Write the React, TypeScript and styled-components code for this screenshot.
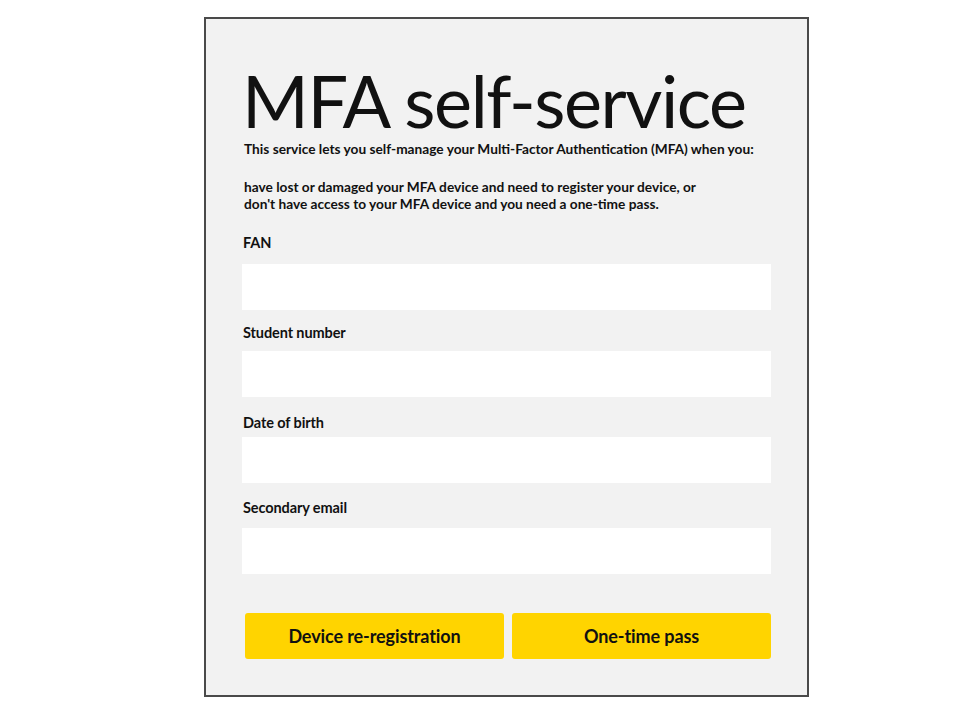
import React from "react";
import styled, { createGlobalStyle } from "styled-components";

const GlobalStyle = createGlobalStyle`
  html, body {
    margin: 0;
    padding: 0;
    background: #ffffff;
  }
  body {
    font-family: Lato, "Open Sans", sans-serif;
    color: #111111;
  }
`;

const Page = styled.div`
  width: 970px;
  height: 727px;
  display: flex;
  justify-content: center;
  padding-top: 17px;
  box-sizing: border-box;
`;

const Card = styled.div`
  width: 605px;
  height: 680px;
  box-sizing: border-box;
  margin-left: 43px;
  border: 2px solid #4a4a4a;
  background: #f2f2f2;
  padding: 49px 36px 0 36px;
  display: flex;
  flex-direction: column;
`;

const Title = styled.h1`
  margin: 0;
  font-family: Lato, sans-serif;
  font-weight: 400;
  font-size: 72px;
  letter-spacing: -1.45px;
  line-height: 64px;
  height: 64px;
  color: #111111;
`;

const Intro = styled.p`
  margin: 8px 0 0 2px;
  font-size: 13.7px;
  font-weight: 700;
  line-height: 17px;
`;

const Reasons = styled.p`
  margin: 21px 0 0 2px;
  font-size: 13.7px;
  font-weight: 700;
  line-height: 17px;
`;

const Field = styled.div<{ $top: number }>`
  display: flex;
  flex-direction: column;
  margin-top: ${(p) => p.$top}px;
`;

const Label = styled.label`
  font-size: 14.5px;
  font-weight: 700;
  letter-spacing: -0.1px;
  line-height: 16px;
  margin-left: 1px;
`;

const Input = styled.input<{ $gap: number }>`
  margin-top: ${(p) => p.$gap}px;
  height: 46px;
  border: none;
  outline: none;
  background: #ffffff;
  padding: 0 10px;
  box-sizing: border-box;
  font-family: Lato, sans-serif;
  font-size: 14px;
`;

const Actions = styled.div`
  display: flex;
  gap: 8px;
  margin-top: 39px;
  padding-left: 3px;
`;

const Button = styled.button`
  flex: 1;
  height: 46px;
  border: none;
  border-radius: 3px;
  background: #ffd400;
  font-family: Lato, sans-serif;
  font-size: 18px;
  font-weight: 700;
  letter-spacing: -0.1px;
  color: #111111;
  cursor: pointer;
`;

const fields = [
  { label: "FAN", top: 23, gap: 13 },
  { label: "Student number", top: 15, gap: 10 },
  { label: "Date of birth", top: 18, gap: 6 },
  { label: "Secondary email", top: 17, gap: 12 },
];

export default function App() {
  return (
    <>
      <GlobalStyle />
      <Page>
        <Card>
          <Title>MFA self-service</Title>
          <Intro>
            This service lets you self-manage your Multi-Factor Authentication
            (MFA) when you:
          </Intro>
          <Reasons>
            have lost or damaged your MFA device and need to register your
            device, or
            <br />
            don't have access to your MFA device and you need a one-time pass.
          </Reasons>
          {fields.map((f) => (
            <Field key={f.label} $top={f.top}>
              <Label>{f.label}</Label>
              <Input $gap={f.gap} type="text" />
            </Field>
          ))}
          <Actions>
            <Button>Device re-registration</Button>
            <Button>One-time pass</Button>
          </Actions>
        </Card>
      </Page>
    </>
  );
}
